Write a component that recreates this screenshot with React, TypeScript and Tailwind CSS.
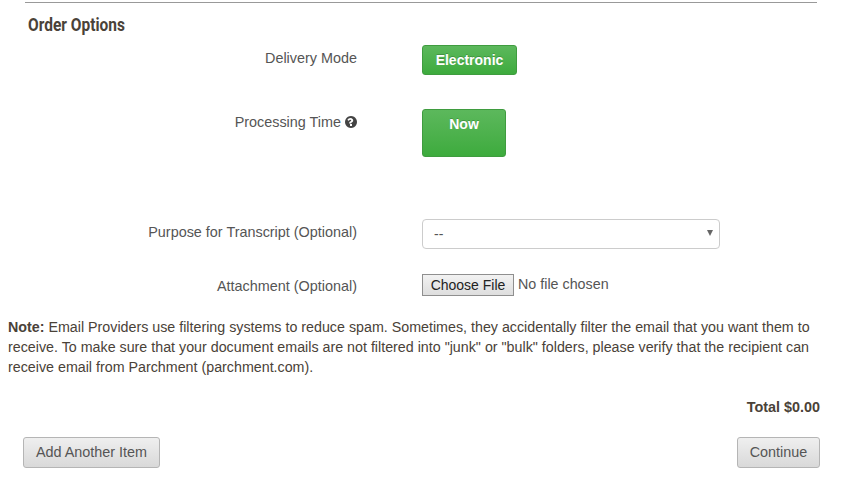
import React from 'react'

const labelClass = 'w-[357px] shrink-0 text-right text-[14.4px] leading-5 text-[#555555]'
const greenClass =
  'rounded-[3px] border border-[#3f9c3f] bg-gradient-to-b from-[#5cb85c] to-[#3dab3d] text-[14px] font-bold text-white [text-shadow:0_-1px_0_rgba(0,0,0,0.2)]'
const grayClass =
  'h-[31px] rounded-[3px] border border-[#b5b5b5] bg-gradient-to-b from-[#efefef] to-[#d9d9d9] text-[14.4px] text-[#555555]'

const HelpIcon = () => (
  <svg viewBox="0 0 1536 1536" className="h-3 w-3 fill-[#444444]">
    <path d="M768 0q209 0 385.500 103t279.500 279.500 103 385.500-103 385.500-279.500 279.500-385.500 103-385.500-103-279.500-279.500-103-385.500 103-385.500 279.500-279.500 385.500-103zm128 1248v-192q0-14-9-23t-23-9h-192q-14 0-23 9t-9 23v192q0 14 9 23t23 9h192q14 0 23-9t9-23zm152-672q0-88-55.500-163t-138.500-116-170-41q-243 0-371 213-15 24 8 42l132 100q7 6 19 6 16 0 25-12 53-68 86-92 34-24 86-24 48 0 85.500 26t37.500 59q0 38-20 61t-68 45q-63 28-115.500 86.500t-52.500 125.500v36q0 14 9 23t23 9h192q14 0 23-9t9-23q0-19 21.500-49.500t54.500-49.500q32-18 49-28.500t46-35 44.500-48 28-60.500 12.500-81z" />
  </svg>
)

const App = () => {
  return (
    <div className="h-[484px] w-[843px] overflow-hidden bg-white pt-[2px] font-['Liberation_Sans',Arial,sans-serif]">
      <div className="ml-[25px] w-[792px] border-t border-[#999999]" />

      <h2 className="mt-[12px] ml-[28px] origin-left scale-x-[0.86] font-['Roboto',sans-serif] text-[18px] leading-5 font-bold text-[#4a4238]">
        Order Options
      </h2>

      <div className="mt-[10px] flex">
        <div className={`${labelClass} pt-[3px]`}>Delivery Mode</div>
        <button className={`${greenClass} ml-[65px] h-[30px] w-[95px]`}>Electronic</button>
      </div>

      <div className="mt-[34px] flex">
        <div className={`${labelClass} flex items-center justify-end gap-[4px] self-start pt-[3px]`}>
          Processing Time <HelpIcon />
        </div>
        <button className={`${greenClass} ml-[65px] h-[48px] w-[84px] pb-[18px]`}>Now</button>
      </div>

      <div className="mt-[62px] flex">
        <div className={`${labelClass} pt-[3px]`}>Purpose for Transcript (Optional)</div>
        <div className="relative ml-[65px] w-[298px]">
          <select className="h-[30px] w-full appearance-none rounded-[4px] border border-[#cccccc] bg-white pl-[11px] text-[14px] text-[#555555]">
            <option>--</option>
          </select>
          <div className="pointer-events-none absolute top-[11px] right-[7px] h-0 w-0 border-x-[3px] border-t-[6px] border-x-transparent border-t-[#666666]" />
        </div>
      </div>

      <div className="mt-[24px] flex">
        <div className={`${labelClass} pt-[3px]`}>Attachment (Optional)</div>
        <div className="ml-[65px] flex items-center">
          <button className="h-[22px] w-[92px] border border-[#8f8f8f] bg-gradient-to-b from-[#f2f2f2] to-[#dedede] text-[14px] leading-4 text-[#222222]">
            Choose File
          </button>
          <span className="ml-[4px] text-[14.3px] text-[#555555]">No file chosen</span>
        </div>
      </div>

      <p className="mt-[21px] ml-[8px] w-[820px] text-[14.27px] leading-5 text-[#4a4238]">
        <b>Note:</b> Email Providers use filtering systems to reduce spam. Sometimes, they accidentally filter the
        email that you want them to receive. To make sure that your document emails are not filtered into "junk" or
        "bulk" folders, please verify that the recipient can receive email from Parchment (parchment.com).
      </p>

      <div className="mt-[20px] mr-[23px] text-right text-[14.4px] leading-5 font-bold text-[#4a4238]">Total $0.00</div>

      <div className="mt-[20px] mr-[23px] ml-[23px] flex justify-between">
        <button className={`${grayClass} w-[137px]`}>Add Another Item</button>
        <button className={`${grayClass} w-[83px]`}>Continue</button>
      </div>
    </div>
  )
}

export default App
